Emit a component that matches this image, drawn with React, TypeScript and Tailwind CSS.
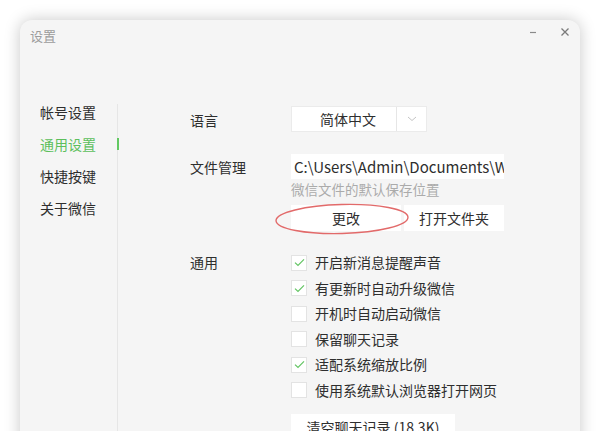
import React from 'react';

const font = { fontFamily: '"Noto Sans CJK SC", "Noto Sans", sans-serif' };

const sideItems = ['帐号设置', '通用设置', '快捷按键', '关于微信'];

const options = [
    { label: '开启新消息提醒声音', checked: true },
    { label: '有更新时自动升级微信', checked: true },
    { label: '开机时自动启动微信', checked: false },
    { label: '保留聊天记录', checked: false },
    { label: '适配系统缩放比例', checked: true },
    { label: '使用系统默认浏览器打开网页', checked: false },
];

const Checkbox: React.FC<{ checked: boolean }> = ({ checked }) => (
    <div className="w-[16px] h-[16px] bg-white border border-[#e3e3e3] flex items-center justify-center flex-shrink-0">
        {checked && (
            <svg width="11" height="9" viewBox="0 0 11 9" fill="none">
                <path d="M1 4.6 L4 7.4 L10 1.4" stroke="#62c462" strokeWidth="1.2" />
            </svg>
        )}
    </div>
);

const App: React.FC = () => {
    return (
        <div className="w-[600px] h-[431px] overflow-hidden bg-white pt-5 px-5 text-[#2e2e2e]" style={font}>
            <div className="h-[440px] w-[560px] rounded-t-[12px] bg-[#f5f5f5] shadow-[0_0_16px_rgba(0,0,0,0.22)] flex flex-col">
                {/* title bar */}
                <div className="h-[84px] flex justify-between flex-shrink-0">
                    <div className="pl-[10px] pt-[8px] text-[13px] leading-4 text-[#9c9c9c]">设置</div>
                    <div className="flex pt-[5px] pr-[10px] gap-[22px]">
                        <svg width="10" height="14" viewBox="0 0 10 14">
                            <path d="M2 7.5 H8" stroke="#8a8a8a" strokeWidth="1.2" />
                        </svg>
                        <svg width="10" height="14" viewBox="0 0 10 14">
                            <path d="M1.5 3.5 L8.5 10.5 M8.5 3.5 L1.5 10.5" stroke="#7a7a7a" strokeWidth="1.3" />
                        </svg>
                    </div>
                </div>

                <div className="flex flex-1">
                    {/* sidebar */}
                    <div className="w-[98px] border-r border-[#e6e6e6] flex-shrink-0">
                        <div className="-mt-2 pl-[20px] flex flex-col">
                            {sideItems.map((item, i) => (
                                <div
                                    key={item}
                                    className={`relative h-[32px] leading-[32px] text-[14px] ${
                                        i === 1 ? 'text-[#5cbf5c]' : 'text-[#2e2e2e]'
                                    }`}
                                >
                                    {item}
                                    {i === 1 && (
                                        <span className="absolute right-[-2px] top-[10px] w-[2px] h-[12px] bg-[#62c962]" />
                                    )}
                                </div>
                            ))}
                        </div>
                    </div>

                    {/* content */}
                    <div className="pl-[72px] pt-[2px] flex-1 text-[14px]">
                        <div className="flex items-center h-[26px]">
                            <div className="w-[101px] pt-[3px]">语言</div>
                            <div className="flex h-[26px] bg-white border border-[#ebebeb]">
                                <div className="w-[105px] flex items-center justify-center pl-[8px] border-r border-[#e6e6e6]">
                                    简体中文
                                </div>
                                <div className="w-[29px] flex items-center justify-center">
                                    <svg width="10" height="6" viewBox="0 0 10 6">
                                        <path d="M1 1 L5 4.5 L9 1" stroke="#c4c4c4" strokeWidth="1" fill="none" />
                                    </svg>
                                </div>
                            </div>
                        </div>

                        <div className="flex mt-[22px]">
                            <div className="w-[101px] pt-[3px]">文件管理</div>
                            <div className="flex flex-col">
                                <div className="w-[213px] h-[25px] bg-white overflow-hidden whitespace-nowrap pl-[3px] text-[15px] leading-[25px]">
                                    C:\Users\Admin\Documents\WeChat Files
                                </div>
                                <div className="text-[13.5px] leading-[20px] text-[#ababab]">
                                    微信文件的默认保存位置
                                </div>
                                <div className="relative flex gap-[3px] mt-[6px]">
                                    <div className="w-[110px] h-[26px] bg-white flex items-center justify-center">更改</div>
                                    <div className="w-[100px] h-[26px] bg-white flex items-center justify-center">打开文件夹</div>
                                    <svg
                                        className="absolute left-[-18px] top-[-3px]"
                                        width="138"
                                        height="34"
                                        viewBox="0 0 138 34"
                                        fill="none"
                                    >
                                        <ellipse
                                            cx="69"
                                            cy="17"
                                            rx="66"
                                            ry="14.5"
                                            stroke="#e26a6a"
                                            strokeWidth="1.4"
                                            transform="rotate(-1.5 69 17)"
                                        />
                                    </svg>
                                </div>
                            </div>
                        </div>

                        <div className="flex mt-[19px]">
                            <div className="w-[101px] leading-[25.5px]">通用</div>
                            <div className="flex flex-col">
                                {options.map((o) => (
                                    <div key={o.label} className="flex items-center h-[25.5px] gap-[8px]">
                                        <Checkbox checked={o.checked} />
                                        <span className="whitespace-nowrap">{o.label}</span>
                                    </div>
                                ))}
                                <div className="mt-[11px] w-[164px] h-[26px] bg-white flex items-center justify-center whitespace-nowrap">
                                    清空聊天记录 (18.3K)
                                </div>
                            </div>
                        </div>
                    </div>
                </div>
            </div>
        </div>
    );
};

export default App;
